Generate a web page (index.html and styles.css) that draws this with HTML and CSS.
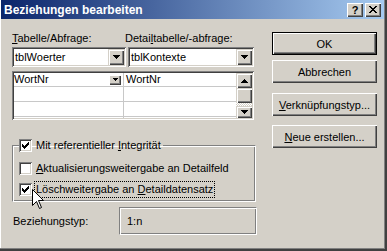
FILE: index.html
```html
<!DOCTYPE html>
<html lang="de">
  <head>
    <meta charset="UTF-8" />
    <meta name="viewport" content="width=device-width, initial-scale=1.0" />
    <title>Beziehungen bearbeiten</title>
    <link rel="stylesheet" href="styles.css">
  </head>
  <body>
    <div class="fenster">
      <div class="titelleiste">
        <span class="titel">Beziehungen bearbeiten</span>
        <div class="titel_knoepfe">
          <span class="titel_knopf">?</span>
          <span class="titel_knopf">
            <svg width="8" height="7" viewBox="0 0 8 7"><path d="M0 0h2v1h1v1h2v-1h1v-1h2v1h-1v1h-1v1h-1v1h1v1h1v1h1v1h-2v-1h-1v-1h-2v1h-1v1h-2v-1h1v-1h1v-1h1v-1h-1v-1h-1v-1h-1z"/></svg>
          </span>
        </div>
      </div>

      <div class="inhalt">
        <div class="links">
          <div class="beschriftungen">
            <label class="beschriftung_1"><u>T</u>abelle/Abfrage:</label>
            <label>Detai<u>l</u>tabelle/-abfrage:</label>
          </div>

          <div class="kombis">
            <div class="kombi kombi_1">
              <span class="kombi_text">tblWoerter</span>
              <span class="pfeil_knopf"><svg width="7" height="4" viewBox="0 0 7 4"><path d="M0 0h7v1h-1v1h-1v1h-1v1h-1v-1h-1v-1h-1v-1h-1z"/></svg></span>
            </div>
            <div class="kombi kombi_2">
              <span class="kombi_text">tblKontexte</span>
              <span class="pfeil_knopf"><svg width="7" height="4" viewBox="0 0 7 4"><path d="M0 0h7v1h-1v1h-1v1h-1v1h-1v-1h-1v-1h-1v-1h-1z"/></svg></span>
            </div>
          </div>

          <div class="raster">
            <div class="zeilen">
              <div class="zeile">
                <div class="zelle zelle_1">
                  <span>WortNr</span>
                  <span class="mini_knopf"><svg width="5" height="3" viewBox="0 0 5 3"><path d="M0 0h5v1h-1v1h-1v1h-1v-1h-1v-1h-1z"/></svg></span>
                </div>
                <div class="zelle">WortNr</div>
              </div>
              <div class="zeile"><div class="zelle zelle_1"></div><div class="zelle"></div></div>
              <div class="zeile"><div class="zelle zelle_1"></div><div class="zelle"></div></div>
              <div class="zeile"><div class="zelle zelle_1"></div><div class="zelle"></div></div>
            </div>
            <div class="bildlauf">
              <span class="bild_knopf bild_hoch"><svg width="7" height="4" viewBox="0 0 7 4"><path d="M3 0h1v1h1v1h1v1h1v1h-7v-1h1v-1h1v-1h1z"/></svg></span>
              <span class="bild_griff"></span>
              <span class="bild_bahn"></span>
              <span class="bild_knopf bild_runter"><svg width="7" height="4" viewBox="0 0 7 4"><path d="M0 0h7v1h-1v1h-1v1h-1v1h-1v-1h-1v-1h-1v-1h-1z"/></svg></span>
            </div>
          </div>

          <fieldset class="gruppe">
            <legend class="option">
              <span class="kaestchen"><svg width="13" height="13" viewBox="0 0 13 13"><path d="M3 5h1v3H3z M4 6h1v3H4z M5 7h1v3H5z M6 6h1v3H6z M7 5h1v3H7z M8 4h1v3H8z M9 3h1v3H9z"/></svg></span>
              <span>Mit referentieller <u>I</u>ntegrität</span>
            </legend>
            <div class="option option_2">
              <span class="kaestchen"></span>
              <span><u>A</u>ktualisierungsweitergabe an Detailfeld</span>
            </div>
            <div class="option option_3">
              <span class="kaestchen"><svg width="13" height="13" viewBox="0 0 13 13"><path d="M3 5h1v3H3z M4 6h1v3H4z M5 7h1v3H5z M6 6h1v3H6z M7 5h1v3H7z M8 4h1v3H8z M9 3h1v3H9z"/></svg></span>
              <span class="fokus">Löschweitergabe an <u>D</u>etaildatensatz</span>
            </div>
          </fieldset>

          <div class="typ_zeile">
            <span>Beziehungstyp:</span>
            <div class="typ_feld">1:n</div>
          </div>
        </div>

        <div class="rechts">
          <button class="knopf standard">OK</button>
          <button class="knopf abbrechen">Abbrechen</button>
          <button class="knopf verknuepfung"><u>V</u>erknüpfungstyp...</button>
          <button class="knopf neu"><u>N</u>eue erstellen...</button>
        </div>
      </div>

      <svg class="mauszeiger" width="12" height="20" viewBox="0 0 12 20">
        <path d="M0.5 0.5V16.5L4.5 12.5L7.5 19.5L9.5 18.5L6.5 11.5H11.5Z" fill="#fff" stroke="#000" stroke-width="1" stroke-linejoin="miter"/>
      </svg>
    </div>
  </body>
</html>
```

FILE: styles.css
```css
* {
  box-sizing: border-box;
  padding: 0;
  margin: 0;
}
body {
  width: 387px;
  height: 251px;
  overflow: hidden;
  background: #d4d0c8;
  font-family: "Liberation Sans", Arial, sans-serif;
  font-size: 11px;
  line-height: 13px;
  color: #000;
}
u {
  text-decoration: underline;
  text-underline-offset: 1px;
}

/* Fensterrahmen */
.fenster {
  position: relative;
  width: 387px;
  height: 251px;
  padding: 0 1px 1px 1px;
  background: #d4d0c8;
  border-right: 2px solid #404040;
  border-bottom: 2px solid #404040;
  box-shadow: inset -1px -1px #808080, inset 1px 0 #fff;
}
.titelleiste {
  display: flex;
  align-items: center;
  height: 19px;
  padding-left: 3px;
  padding-right: 3px;
  background: linear-gradient(to right, #0a246a, #a6caf0);
}
.titel {
  flex: 1;
  color: #fff;
  font-weight: bold;
  font-size: 12px;
  line-height: 14px;
}
.titel_knoepfe {
  display: flex;
  gap: 2px;
}
.titel_knopf {
  display: flex;
  align-items: center;
  justify-content: center;
  width: 16px;
  height: 14px;
  background: #d4d0c8;
  box-shadow: inset 1px 1px #fff, inset -1px -1px #404040, inset -2px -2px #808080;
  font-weight: bold;
  font-size: 11px;
  line-height: 14px;
  padding-top: 1px;
}
.titel_knopf svg {
  display: block;
  margin-top: -1px;
}

/* Inhalt */
.inhalt {
  display: flex;
  padding: 13px 0 0 11px;
}
.links {
  width: 245px;
}
.rechts {
  display: flex;
  flex-direction: column;
  width: 105px;
  margin-left: 15px;
}

.beschriftungen {
  display: flex;
  height: 13px;
}
.beschriftung_1 {
  width: 113px;
}

.kombis {
  display: flex;
  gap: 2px;
  margin-top: 2px;
}
.kombi {
  display: flex;
  align-items: center;
  height: 20px;
  padding: 2px;
  background: #fff;
  box-shadow: inset 1px 1px #808080, inset -1px -1px #fff, inset 2px 2px #404040, inset -2px -2px #d4d0c8;
}
.kombi_1 {
  width: 114px;
}
.kombi_2 {
  width: 126px;
}
.kombi_text {
  flex: 1;
  padding-left: 1px;
}
.pfeil_knopf {
  display: flex;
  align-items: center;
  justify-content: center;
  width: 16px;
  height: 16px;
  background: #d4d0c8;
  box-shadow: inset 1px 1px #d4d0c8, inset 2px 2px #fff, inset -1px -1px #404040, inset -2px -2px #808080;
}
.pfeil_knopf svg,
.bild_knopf svg,
.mini_knopf svg {
  display: block;
}

/* Raster */
.raster {
  display: flex;
  width: 242px;
  height: 49px;
  margin-top: 4px;
  padding: 2px;
  background: #fff;
  box-shadow: inset 1px 1px #808080, inset -1px -1px #fff, inset 2px 2px #404040, inset -2px -2px #d4d0c8;
}
.zeilen {
  flex: 1;
  overflow: hidden;
}
.zeile {
  display: flex;
  height: 15px;
  border-bottom: 1px solid #c8c8c8;
}
.zeile:first-child {
  height: 14px;
}
.zelle {
  flex: 1;
  display: flex;
  align-items: center;
  padding-left: 2px;
}
.zelle_1 {
  flex: none;
  width: 110px;
  padding-left: 0;
  border-right: 1px solid #c8c8c8;
}
.zelle_1 span:first-child {
  flex: 1;
}
.mini_knopf {
  display: flex;
  align-items: center;
  justify-content: center;
  width: 12px;
  height: 10px;
  margin-right: 2px;
  background: #d4d0c8;
  box-shadow: inset 1px 1px #fff, inset -1px -1px #404040, inset -2px -2px #808080;
}
.bildlauf {
  display: flex;
  flex-direction: column;
  width: 16px;
}
.bild_knopf,
.bild_griff {
  display: flex;
  align-items: center;
  justify-content: center;
  background: #d4d0c8;
  box-shadow: inset 1px 1px #d4d0c8, inset 2px 2px #fff, inset -1px -1px #404040, inset -2px -2px #808080;
}
.bild_hoch {
  height: 15px;
}
.bild_griff {
  height: 15px;
}
.bild_bahn {
  height: 3px;
  background: repeating-conic-gradient(#d4d0c8 0 25%, #fff 0 50%) 0 0 / 2px 2px;
}
.bild_runter {
  height: 12px;
}

/* Gruppe mit Kontrollkaestchen */
.gruppe {
  width: 244px;
  margin-top: 19px;
  padding: 0 0 5px 6px;
  border: 1px solid;
  border-color: #808080 #fff #fff #808080;
  box-shadow: inset 1px 1px #fff, inset -1px -1px #808080;
}
.gruppe legend {
  margin-left: 0;
  padding-right: 2px;
}
.option {
  display: flex;
  align-items: center;
  gap: 4px;
  height: 13px;
}
.option_2 {
  margin-top: 10px;
}
.option_3 {
  margin-top: 8px;
}
.kaestchen {
  display: block;
  width: 13px;
  height: 13px;
  background: #fff;
  box-shadow: inset 1px 1px #808080, inset -1px -1px #fff, inset 2px 2px #404040, inset -2px -2px #d4d0c8;
}
.kaestchen svg {
  display: block;
}
.fokus {
  outline: 1px dotted #000;
  outline-offset: 1px;
}

/* Beziehungstyp */
.typ_zeile {
  display: flex;
  align-items: center;
  margin-top: 5px;
  padding-left: 1px;
}
.typ_feld {
  display: flex;
  align-items: center;
  width: 138px;
  height: 28px;
  margin-left: auto;
  padding-left: 7px;
  border: 1px solid;
  border-color: #808080 #fff #fff #808080;
  box-shadow: inset 1px 1px #fff, inset -1px -1px #808080;
}

/* Knoepfe rechts */
.knopf {
  height: 23px;
  background: #d4d0c8;
  border: none;
  font-family: "Liberation Sans", Arial, sans-serif;
  font-size: 11px;
  color: #000;
  box-shadow: inset 1px 1px #fff, inset -1px -1px #404040, inset -2px -2px #808080;
}
.knopf.standard {
  border: 1px solid #000;
}
.abbrechen {
  margin-top: 5px;
}
.verknuepfung {
  margin-top: 10px;
}
.neu {
  margin-top: 9px;
}

.mauszeiger {
  position: absolute;
  left: 32px;
  top: 189px;
}
```
